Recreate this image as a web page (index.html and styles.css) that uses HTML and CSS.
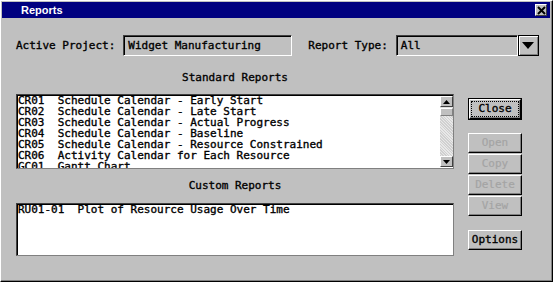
FILE: index.html
```html
<!DOCTYPE html>
<html>
<head>
<meta charset="utf-8">
<link rel="stylesheet" href="styles.css">
</head>
<body>
<div class="window">
  <div class="titlebar">
    <span class="title">Reports</span>
    <span class="xbtn"><svg width="9" height="9" viewBox="0 0 9 9"><path d="M1 1L8 8M8 1L1 8" stroke="#000" stroke-width="2"/></svg></span>
  </div>
  <div class="content">
    <div class="toprow">
      <span class="label">Active Project:</span>
      <div class="field project">Widget Manufacturing</div>
      <span class="label type-label">Report Type:</span>
      <div class="combo">
        <div class="field combo-text">All</div>
        <div class="combo-btn"><svg width="12" height="7" viewBox="0 0 12 7"><path d="M0 0H12L6 7Z" fill="#000"/></svg></div>
      </div>
    </div>
    <div class="main">
      <div class="lists">
        <div class="caption">Standard Reports</div>
        <div class="listbox std">
          <div class="rows">
            <div class="row">CR01  Schedule Calendar - Early Start</div>
            <div class="row">CR02  Schedule Calendar - Late Start</div>
            <div class="row">CR03  Schedule Calendar - Actual Progress</div>
            <div class="row">CR04  Schedule Calendar - Baseline</div>
            <div class="row">CR05  Schedule Calendar - Resource Constrained</div>
            <div class="row">CR06  Activity Calendar for Each Resource</div>
            <div class="row">GC01  Gantt Chart</div>
          </div>
          <div class="scrollbar">
            <div class="sb-btn"><svg width="7" height="4" viewBox="0 0 7 4"><path d="M3.5 0L7 4H0Z" fill="#000"/></svg></div>
            <div class="sb-thumb"></div>
            <div class="sb-track"></div>
            <div class="sb-btn"><svg width="7" height="4" viewBox="0 0 7 4"><path d="M0 0H7L3.5 4Z" fill="#000"/></svg></div>
          </div>
        </div>
        <div class="caption custom-cap">Custom Reports</div>
        <div class="listbox custom">
          <div class="rows">
            <div class="row">RU01-01  Plot of Resource Usage Over Time</div>
          </div>
        </div>
      </div>
      <div class="buttons">
        <div class="btn-default"><div class="btn close"><span class="focus">Close</span></div></div>
        <div class="btn disabled open">Open</div>
        <div class="btn disabled">Copy</div>
        <div class="btn disabled">Delete</div>
        <div class="btn disabled">View</div>
        <div class="btn options">Options</div>
      </div>
    </div>
  </div>
</div>
</body>
</html>
```
FILE: styles.css
```css
* { box-sizing: border-box; }
html, body { margin: 0; padding: 0; }
body {
  width: 553px;
  height: 282px;
  overflow: hidden;
  background: #c0c0c0;
  font-family: "DejaVu Sans Mono", "Liberation Mono", monospace;
  font-size: 11px;
  font-weight: normal;
  -webkit-text-stroke: 0.35px #000;
  color: #000;
}
.window {
  width: 553px;
  height: 282px;
  border: 1px solid;
  border-color: #fff #000 #000 #fff;
  box-shadow: inset -1px -1px #808080;
  padding: 1px 2px 2px 1px;
  display: flex;
  flex-direction: column;
}
.titlebar {
  height: 16px;
  flex: none;
  background: #000080;
  display: flex;
  align-items: center;
  justify-content: space-between;
  padding: 0 3px 0 19px;
}
.title {
  font-family: "Liberation Sans Narrow", "Liberation Sans", Arial, sans-serif;
  font-weight: bold;
  font-size: 11px;
  color: #fff;
  -webkit-text-stroke: 0;
}
.xbtn {
  width: 12px;
  height: 12px;
  background: #c0c0c0;
  border: 1px solid;
  border-color: #fff #404040 #404040 #fff;
  display: flex;
  align-items: center;
  justify-content: center;
}
.content {
  flex: 1;
  padding: 17px 0 0 14px;
  display: flex;
  flex-direction: column;
}
.toprow {
  display: flex;
  align-items: center;
  height: 21px;
}
.label { white-space: pre; }
.field {
  height: 21px;
  border: 1px solid;
  border-color: #404040 #fff #fff #404040;
  box-shadow: inset 1px 1px #000;
  padding: 0 0 0 4px;
  line-height: 19px;
  white-space: pre;
}
.project { width: 169px; margin-left: 8px; }
.type-label { margin-left: 16px; }
.combo { display: flex; margin-left: 8px; width: 143px; }
.combo-text { flex: 1; }
.combo-btn {
  width: 21px;
  height: 21px;
  border: 1px solid #000;
  box-shadow: inset 1px 1px #fff, inset -1px -1px #808080;
  display: flex;
  align-items: center;
  justify-content: center;
}
.main { display: flex; }
.lists {
  width: 438px;
  padding-top: 15px;
  display: flex;
  flex-direction: column;
}
.caption {
  height: 14px;
  line-height: 14px;
  text-align: center;
}
.custom-cap { margin-top: 10px; }
.listbox {
  background: #fff;
  border: 1px solid;
  border-color: #404040 #808080 #808080 #404040;
  box-shadow: inset 1px 1px #000;
  display: flex;
  overflow: hidden;
}
.std { height: 75px; margin-top: 9px; }
.custom { height: 53px; margin-top: 10px; }
.rows {
  flex: 1;
  padding: 0 0 0 1px;
  overflow: hidden;
}
.row {
  height: 11px;
  line-height: 11px;
  white-space: pre;
}
.scrollbar {
  width: 13px;
  margin: 1px 0 1px 0;
  display: flex;
  flex-direction: column;
  background: #e0e0e0;
}
.sb-btn {
  height: 11px;
  background: #c0c0c0;
  border: 1px solid;
  border-color: #fff #404040 #404040 #fff;
  display: flex;
  align-items: center;
  justify-content: center;
}
.sb-thumb {
  height: 8px;
  margin-top: 1px;
  background: #c0c0c0;
  border: 1px solid;
  border-color: #fff #808080 #808080 #fff;
}
.sb-track {
  flex: 1;
  background-color: #dcdcdc;
  background-image: repeating-linear-gradient(45deg, #d0d0d0 0 1px, #e8e8e8 1px 2px);
}
.buttons {
  margin-left: 14px;
  width: 54px;
  display: flex;
  flex-direction: column;
}
.btn {
  height: 20px;
  border: 1px solid;
  border-color: #fff #000 #000 #fff;
  box-shadow: inset -1px -1px #808080;
  background: #c0c0c0;
  display: flex;
  align-items: center;
  justify-content: center;
  line-height: 12px;
}
.btn-default {
  margin-top: 42px;
  height: 22px;
  border: 1px solid #000;
}
.btn.close {
  height: 20px;
  padding: 1px;
}
.focus {
  flex: 1;
  align-self: stretch;
  border: 1px dotted #000;
  display: flex;
  align-items: center;
  justify-content: center;
}
.open { margin-top: 13px; }
.btn.disabled { color: #a4a4a4; -webkit-text-stroke: 0.2px #a4a4a4; margin-bottom: 1px; }
.options { margin-top: 13px; }
```
